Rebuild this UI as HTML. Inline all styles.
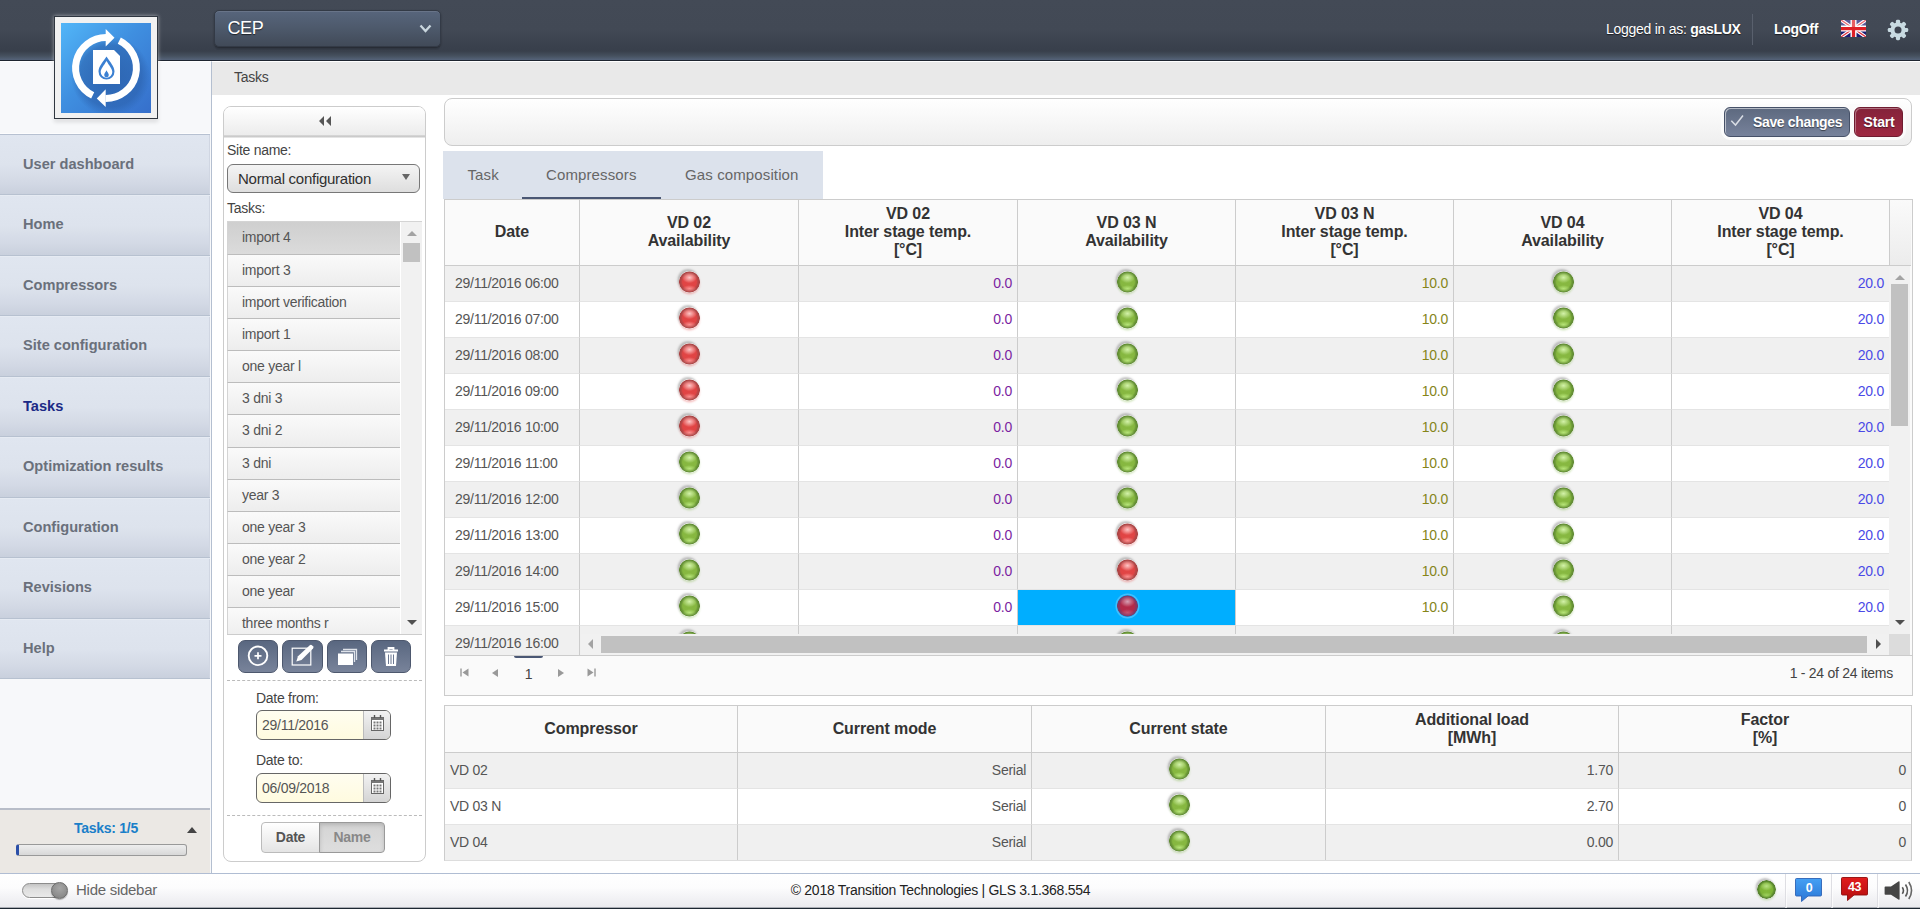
<!DOCTYPE html>
<html lang="en">
<head>
<meta charset="utf-8">
<title>Tasks</title>
<style>
*{box-sizing:border-box;margin:0;padding:0}
html,body{width:1920px;height:909px;overflow:hidden;background:#fff;font-family:"Liberation Sans",sans-serif;font-size:14px;color:#333;letter-spacing:-.27px}
.abs{position:absolute}
/* header */
#hdr{position:absolute;left:0;top:0;width:1920px;height:61px;background:linear-gradient(#434a56 0,#424955 30px,#3a414d 46px,#383f4b 51px,#46515f 56px,#55637a 60px,#1e2530 60px,#1e2530 61px)}
#logo{z-index:5;position:absolute;left:54px;top:16px;width:104px;height:103px;background:#f1f1f1;border:1px solid #2f3640;box-shadow:0 0 4px rgba(255,255,255,.55),0 3px 4px rgba(0,0,0,.12)}
#logo svg{position:absolute;left:6px;top:6px}
#cep{position:absolute;left:213.500px;top:10px;width:227px;height:37px;border-radius:5px;background:linear-gradient(#57657c,#4d596b 50%,#414a58);border:1px solid #333a46;box-shadow:inset 0 1px 0 rgba(255,255,255,.1),0 1px 2px rgba(0,0,0,.35),0 4px 0 -1px rgba(50,56,68,.5);color:#fff;font-size:18px;line-height:34px;padding-left:13px;letter-spacing:-.4px;text-shadow:0 1px 1px rgba(0,0,0,.6)}
#cep svg{position:absolute;right:8px;top:13px}
.hr{position:absolute;top:0;height:60px;line-height:58px;color:#fff;font-size:14px;white-space:nowrap;text-shadow:0 1px 1px rgba(0,0,0,.6)}
/* sidebar */
#side{position:absolute;left:0;top:61px;width:212px;height:812px;background:#f7f8fa;border-right:1px solid #b4bfd0;border-top:1px solid #fff}
#menu{position:absolute;left:0;top:72px;width:210px;border-top:1px solid #b7c1d1;box-shadow:0 -1px 0 #fdfdfe}
#menu div{height:60.5px;line-height:57px;padding-left:23px;font-weight:bold;font-size:14.6px;letter-spacing:0;color:#6a707b;background:linear-gradient(#e0e6f0,#dde3ed 50%,#d3d9e5 80%,#c9d0dd);border-top:1px solid #e6ebf3;border-bottom:1px solid #b7c1d0;box-shadow:inset -1px 0 0 #d0d6e2}
#menu div.act{color:#1c2a86}
#menu div:first-child{height:60px;border-top:0;line-height:59px}
#taskbox{position:absolute;left:0;top:746px;width:210px;height:66px;background:#ebe8e4;border-top:2px solid #b8bdc8}
/* breadcrumb */
#bc{position:absolute;left:212px;top:61px;width:1708px;height:34px;background:#e9e9e9;border-top:1px solid #fff;line-height:31px;padding-left:22px;font-size:14px;color:#444}
/* left panel */
#lp{position:absolute;left:223px;top:106px;width:203px;height:756px;border:1px solid #ccc;border-radius:8px;background:#fff;overflow:hidden}
#lph{height:31px;background:linear-gradient(#fff,#ececec 28px,#bdbdbd 29px,#d8d8d8 30px,#f0f0f0 31px);text-align:center}
.lbl{position:absolute;font-size:14px;color:#444;white-space:nowrap}
#sel{position:absolute;left:3px;top:57px;width:193px;height:29px;border:1px solid #777;border-radius:6px;background:linear-gradient(#f4f4f4,#dedede);font-size:15px;line-height:27px;padding-left:10px;color:#303030}
#list{position:absolute;left:3px;top:114px;width:195px;height:414px;background:#f3f3f3;border-top:1px solid #d4d4d4;border-bottom:1px solid #ccc;overflow:hidden}
#list .it{height:32.1px;width:173px;line-height:30px;padding-left:14px;font-size:14px;color:#555;background:linear-gradient(#fafafa,#ededed);border-bottom:1px solid #bcbcbc;border-left:1px solid #d4d4d4;white-space:nowrap}
#list .it.sel{height:33px;line-height:31px;background:linear-gradient(#cfcfcf,#dbdbdb)}
.ib{position:absolute;top:533px;width:40.400px;height:33px;border-radius:7px;background:linear-gradient(#596780,#78839a);border:1px solid #4d586e}
.ib svg{position:absolute;left:0;top:0}
.dash{position:absolute;left:3px;width:195px;border-top:1px dashed #bbb;height:0}
.din{position:absolute;left:32px;width:135px;height:30px;border:1px solid #666;border-radius:6px;background:linear-gradient(#fffdf0,#fffbdf);overflow:hidden;font-size:14px;line-height:28px;padding-left:5px;color:#555}
.din i{position:absolute;right:0;top:0;width:27px;height:28px;background:linear-gradient(#f2f2f2,#d4d4d4);border-left:1px solid #bbb}
/* main */
#tb{position:absolute;left:444px;top:98px;width:1468px;height:48px;border:1px solid #ccc;border-radius:8px;background:linear-gradient(#fff,#eee)}
.btn{position:absolute;top:107px;height:30px;border-radius:6px;color:#fff;font-weight:bold;font-size:14px;line-height:29px;white-space:nowrap;text-shadow:0 1px 1px rgba(0,0,0,.5);letter-spacing:-.2px}
#tabs{position:absolute;left:443px;top:151px;width:380px;height:48px;background:#dce2ec}
#tabs span{position:absolute;top:0;height:48px;line-height:48px;font-size:15px;color:#666;letter-spacing:.12px}
#tabs b{position:absolute;left:79px;top:45.500px;width:139px;height:2.500px;background:#4a5774}
table{border-collapse:separate;border-spacing:0;table-layout:fixed}
.g{position:absolute;border:1px solid #ccc;background:#fafafa;overflow:hidden}
.g th{letter-spacing:-.1px;font-size:16px;line-height:18px;font-weight:bold;color:#333;text-align:center;background:#fafafa;border-left:1px solid #ccc;vertical-align:middle;padding:0 0 2px}
.g td{height:36px;font-size:14px;color:#555;border-left:1px solid #ccc;border-top:1px solid #e4e4e4;padding:0 5px 2px;white-space:nowrap}
.g tr:nth-child(2) td{border-top-color:#ccc}
.g td:first-child{border-left:0}
#g1 td:first-child{padding-left:10px}
#g2 th{padding-bottom:0}
.g tr.a td{background:#f0f0f0}
.g tr.b td{background:#fff}
.g td.r{text-align:right}
.g td.c{text-align:center;padding:0 0 2px}
.led{display:inline-block;width:21px;height:21.500px;border-radius:50%;vertical-align:middle;position:relative;top:-.7px;left:.5px}
.led.gr{background:radial-gradient(ellipse 7px 3.500px at 50% 80%,rgba(190,235,130,.85),rgba(190,235,130,0)),radial-gradient(ellipse 7.500px 5.500px at 50% 30%,rgba(215,245,175,.95),rgba(200,240,150,0)),radial-gradient(circle at 50% 50%,#88b942 0,#86b740 6.800px,#6a9636 8.600px,#5f8a33 10.100px,rgba(95,140,50,0) 10.900px);box-shadow:-1.500px -2px 2px rgba(140,140,140,.5),0 1.500px 2px rgba(120,180,60,.3)}
.led.rd{background:radial-gradient(ellipse 7px 3.500px at 50% 80%,rgba(255,160,160,.8),rgba(255,160,160,0)),radial-gradient(ellipse 7.500px 5.500px at 50% 30%,rgba(255,205,205,.95),rgba(255,190,190,0)),radial-gradient(circle at 50% 50%,#e24545 0,#e04444 6.800px,#b54646 8.600px,#a94444 10.100px,rgba(169,68,68,0) 10.900px);box-shadow:-1.500px -2px 2px rgba(140,140,140,.5),0 1.500px 2px rgba(230,60,60,.3)}
.g td.c1{color:#7b1fa2}.g td.c2{color:#85851a}.g td.c3{color:#4a4ae6}
/* footer */
#ft{position:absolute;left:0;top:873px;width:1920px;height:36px;background:linear-gradient(#fff,#fcfcfd 40%,#f1f1f4 75%,#e9e9ed);border-top:1px solid #b0bdd3;border-bottom:1px solid #1c2631;box-shadow:inset 0 -1px 0 rgba(28,38,49,.3)}
</style>
</head>
<body>
<div id="hdr">
<div id="cep">CEP<svg width="13" height="10" viewBox="0 0 13 10"><path d="M1.500 1.500L6.500 7L11.500 1.500" fill="none" stroke="#c9d6de" stroke-width="2.300"/></svg></div>
<div class="hr" style="left:1606px">Logged in as: <b>gasLUX</b></div>
<div class="abs" style="left:1752px;top:14px;width:1px;height:31px;background:#59606d"></div>
<div class="hr" style="left:1774px;font-weight:bold;letter-spacing:-.3px">LogOff</div>
<svg class="abs" style="left:1841px;top:20px" width="25" height="17" viewBox="0 0 50 34"><rect width="50" height="34" fill="#1b1b72"/><path d="M0 0L50 34M50 0L0 34" stroke="#fff" stroke-width="7"/><path d="M0 0L50 34M50 0L0 34" stroke="#e0303c" stroke-width="2.500"/><path d="M25 0V34M0 17H50" stroke="#fff" stroke-width="12"/><path d="M25 0V34M0 17H50" stroke="#df2026" stroke-width="6.500"/><rect width="50" height="14" fill="#fff" opacity=".28"/></svg>
<svg class="abs" style="left:1887px;top:19px" width="22" height="22" viewBox="-11 -11 22 22"><g fill="#c9dbe2"><circle r="7.600"/><rect x="-2.100" y="-10.200" width="4.200" height="20.400" rx="1.400"/><rect x="-2.100" y="-10.200" width="4.200" height="20.400" rx="1.400" transform="rotate(45)"/><rect x="-2.100" y="-10.200" width="4.200" height="20.400" rx="1.400" transform="rotate(90)"/><rect x="-2.100" y="-10.200" width="4.200" height="20.400" rx="1.400" transform="rotate(135)"/></g><circle r="3.500" fill="#3e4551"/></svg>
</div>
<div id="logo"><svg width="90" height="90" viewBox="0 0 90 90"><defs><linearGradient id="lg" x1="0" y1="0" x2="1" y2="1"><stop offset="0" stop-color="#52b6f8"/><stop offset=".45" stop-color="#3f8fe0"/><stop offset="1" stop-color="#366fcb"/></linearGradient><radialGradient id="sh" cx=".55" cy=".59" r=".44"><stop offset="0" stop-color="#2a5ea8" stop-opacity=".8"/><stop offset=".78" stop-color="#2a5ea8" stop-opacity=".55"/><stop offset="1" stop-color="#2a5ea8" stop-opacity="0"/></radialGradient></defs><rect width="90" height="90" fill="url(#lg)"/><rect width="90" height="90" fill="url(#sh)"/>
<g fill="none" stroke="#fff" stroke-width="7"><path d="M31.7 72.4A30.5 30.5 0 0 1 45.5 14.500"/><path d="M58.300 17.600A30.500 30.500 0 0 1 44.500 75.500"/></g>
<path d="M44.700 6L53.500 14.800L44.700 23.500Z" fill="#fff"/><path d="M44.700 66.300L35.800 75.500L44.700 84Z" fill="#fff"/>
<path d="M32 27H53L59 33V61H32Z" fill="#fff"/>
<path d="M45.500 33.500C49 39 53.500 43.500 53.500 48.500A8 8 0 0 1 37.500 48.500C37.500 43.500 42 39 45.500 33.500Z" fill="#3b80d2"/><path d="M45.500 38C48 42.500 51.300 45.500 51.300 49A5.800 5.800 0 0 1 39.700 49C39.700 45.500 43 42.500 45.500 38Z" fill="#fff"/><path d="M45.500 47.300C46.500 49.300 47.800 50.600 47.800 52A2.300 2.300 0 0 1 43.200 52C43.200 50.600 44.500 49.300 45.500 47.300Z" fill="#3b80d2"/>
</svg></div>
<div id="side">
<div id="menu"><div>User dashboard</div><div>Home</div><div>Compressors</div><div>Site configuration</div><div class="act">Tasks</div><div>Optimization results</div><div>Configuration</div><div>Revisions</div><div>Help</div></div>
<div id="taskbox"><div class="abs" style="left:74px;top:10px;font-weight:bold;font-size:14px;color:#1a7fc9;white-space:nowrap">Tasks: 1/5</div><div class="abs" style="left:187px;top:16.500px;width:0;height:0;border:5px solid transparent;border-top:0;border-bottom:6px solid #444"></div><div class="abs" style="left:16px;top:34px;width:171px;height:12px;border:1px solid #999;border-radius:3px;background:linear-gradient(#eee,#d8d8d8);border-left:3px solid #2b4fa8"></div></div>
</div>
<div id="bc">Tasks</div>
<div id="lp">
<div id="lph"><svg width="14" height="10" viewBox="0 0 14 10" style="margin-top:9px"><path d="M6 0V10L1 5ZM13 0V10L8 5Z" fill="#555"/></svg></div>
<div class="lbl" style="left:3px;top:35px">Site name:</div>
<div id="sel">Normal configuration<svg class="abs" style="right:9px;top:9px" width="8" height="6" viewBox="0 0 8 6"><path d="M0 0H8L4 6Z" fill="#666"/></svg></div>
<div class="lbl" style="left:3px;top:93px">Tasks:</div>
<div id="list"><div class="it sel">import 4</div><div class="it">import 3</div><div class="it">import verification</div><div class="it">import 1</div><div class="it">one year l</div><div class="it">3 dni 3</div><div class="it">3 dni 2</div><div class="it">3 dni</div><div class="it">year 3</div><div class="it">one year 3</div><div class="it">one year 2</div><div class="it">one year</div><div class="it">three months r</div>
<div class="abs" style="left:173px;top:0;width:22px;height:414px;background:#f1f1f1;border-left:1px solid #fff"></div>
<div class="abs" style="left:179.500px;top:9px;width:0;height:0;border:5px solid transparent;border-top:0;border-bottom:5px solid #a3a3a3"></div>
<div class="abs" style="left:176px;top:21px;width:17px;height:19px;background:#c1c1c1"></div>
<div class="abs" style="left:179.500px;top:398px;width:0;height:0;border:5px solid transparent;border-bottom:0;border-top:5px solid #505050"></div>
</div>
<div class="ib" style="left:14px"><svg width="38" height="31" viewBox="0 0 38 31"><circle cx="19" cy="14.800" r="9.300" fill="none" stroke="#fff" stroke-width="1.900"/><path d="M19 11.300V18.300M15.500 14.800H22.500" stroke="#fff" stroke-width="1.700"/></svg></div>
<div class="ib" style="left:58.300px"><svg width="38" height="31" viewBox="0 0 38 31"><rect x="9.200" y="7.200" width="18.600" height="16.800" fill="none" stroke="#fff" stroke-width="1.200"/><path d="M13.300 20.500L15 15.300L26.800 4.200Q28 3.300 29.200 4.500L30 5.300Q31 6.500 30 7.600L18.500 19Z" fill="#fff"/></svg></div>
<div class="ib" style="left:102.600px"><svg width="38" height="31" viewBox="0 0 38 31"><path d="M15 8.500H28.500V19" fill="none" stroke="#dfe3ea" stroke-width="1.300"/><path d="M13 10.500H26.500V21" fill="none" stroke="#dfe3ea" stroke-width="1.300"/><rect x="10" y="12.500" width="15" height="11.500" fill="#fff"/></svg></div>
<div class="ib" style="left:147px"><svg width="38" height="31" viewBox="0 0 38 31"><path d="M12 9.500H26M16.500 9V7H21.500V9" fill="none" stroke="#fff" stroke-width="1.800"/><path d="M13 11.500H25L24 25H14Z" fill="#fff"/><path d="M16.500 13.500V23M19 13.500V23M21.500 13.500V23" stroke="#6b7790" stroke-width="1"/></svg></div>
<div class="dash" style="top:573px"></div>
<div class="lbl" style="left:32px;top:583px">Date from:</div>
<div class="din" style="top:603px">29/11/2016<i><svg class="abs" style="left:7px;top:4px" width="13" height="16" viewBox="0 0 13 16"><rect x=".5" y="2.500" width="12" height="13" fill="#fff" stroke="#666" stroke-width="1"/><rect x=".5" y="2.500" width="12" height="2.500" fill="#777"/><path d="M3.500 0V3M9.500 0V3" stroke="#555" stroke-width="1.400"/><g fill="#777"><rect x="2.500" y="6.500" width="2" height="2"/><rect x="5.500" y="6.500" width="2" height="2"/><rect x="8.500" y="6.500" width="2" height="2"/><rect x="2.500" y="9.500" width="2" height="2"/><rect x="5.500" y="9.500" width="2" height="2"/><rect x="8.500" y="9.500" width="2" height="2"/><rect x="2.500" y="12.500" width="2" height="2"/><rect x="5.500" y="12.500" width="2" height="2"/><rect x="8.500" y="12.500" width="2" height="2"/></g></svg></i></div>
<div class="lbl" style="left:32px;top:645px">Date to:</div>
<div class="din" style="top:666px">06/09/2018<i><svg class="abs" style="left:7px;top:4px" width="13" height="16" viewBox="0 0 13 16"><rect x=".5" y="2.500" width="12" height="13" fill="#fff" stroke="#666" stroke-width="1"/><rect x=".5" y="2.500" width="12" height="2.500" fill="#777"/><path d="M3.500 0V3M9.500 0V3" stroke="#555" stroke-width="1.400"/><g fill="#777"><rect x="2.500" y="6.500" width="2" height="2"/><rect x="5.500" y="6.500" width="2" height="2"/><rect x="8.500" y="6.500" width="2" height="2"/><rect x="2.500" y="9.500" width="2" height="2"/><rect x="5.500" y="9.500" width="2" height="2"/><rect x="8.500" y="9.500" width="2" height="2"/><rect x="2.500" y="12.500" width="2" height="2"/><rect x="5.500" y="12.500" width="2" height="2"/><rect x="8.500" y="12.500" width="2" height="2"/></g></svg></i></div>
<div class="dash" style="top:708px"></div>
<div class="abs" style="left:37px;top:715px;width:59px;height:31px;border:1px solid #bbb;border-radius:4px 0 0 4px;background:linear-gradient(#fff,#e4e4e4);font-weight:bold;font-size:14px;line-height:28px;text-align:center;color:#555">Date</div>
<div class="abs" style="left:95px;top:715px;width:66px;height:31px;border:1px solid #999;border-radius:0 4px 4px 0;background:linear-gradient(#d4d4d4,#dedede);font-weight:bold;font-size:14px;line-height:28px;text-align:center;color:#888;box-shadow:inset 0 2px 4px rgba(0,0,0,.15)">Name</div>
</div>
<div id="tb"></div>
<div class="abs" style="left:1721px;top:104px;width:185px;height:36px;border-radius:9px;background:#fbfbfb"></div>
<div class="btn" style="left:1724px;width:126px;background:linear-gradient(#5d697f,#77829b);border:1px solid #465168;box-shadow:inset 1px 1px 0 rgba(255,255,255,.55);padding-left:28px;letter-spacing:-.35px">Save changes<svg class="abs" style="left:5px;top:6px" width="15" height="13" viewBox="0 0 15 13"><path d="M1.300 6.800L5.500 11L13 1.500" fill="none" stroke="#d9dde4" stroke-width="1.500"/></svg></div>
<div class="btn" style="left:1854px;width:49px;background:linear-gradient(#84233a,#9e2841);border:1px solid #6f1c30;box-shadow:inset 1px 1px 0 rgba(255,255,255,.35);text-align:center;padding-left:1px">Start</div>
<div id="tabs"><span style="left:24.500px">Task</span><span style="left:103px">Compressors</span><span style="left:242px">Gas composition</span><b></b></div>
<div class="g" id="g1" style="left:444px;top:199px;width:1469px;height:497px">
<table style="position:absolute;left:0;top:0;width:1444px"><colgroup><col style="width:134px"><col style="width:219px"><col style="width:219px"><col style="width:218px"><col style="width:218px"><col style="width:218px"><col style="width:218px"></colgroup>
<tr style="height:65px"><th style="border-left:0">Date</th><th>VD 02<br>Availability</th><th>VD 02<br>Inter stage temp.<br>[°C]</th><th>VD 03 N<br>Availability</th><th>VD 03 N<br>Inter stage temp.<br>[°C]</th><th>VD 04<br>Availability</th><th>VD 04<br>Inter stage temp.<br>[°C]</th></tr>
<tr class="a"><td>29/11/2016 06:00</td><td class="c"><span class="led rd"></span></td><td class="r c1">0.0</td><td class="c"><span class="led gr"></span></td><td class="r c2">10.0</td><td class="c"><span class="led gr"></span></td><td class="r c3">20.0</td></tr>
<tr class="b"><td>29/11/2016 07:00</td><td class="c"><span class="led rd"></span></td><td class="r c1">0.0</td><td class="c"><span class="led gr"></span></td><td class="r c2">10.0</td><td class="c"><span class="led gr"></span></td><td class="r c3">20.0</td></tr>
<tr class="a"><td>29/11/2016 08:00</td><td class="c"><span class="led rd"></span></td><td class="r c1">0.0</td><td class="c"><span class="led gr"></span></td><td class="r c2">10.0</td><td class="c"><span class="led gr"></span></td><td class="r c3">20.0</td></tr>
<tr class="b"><td>29/11/2016 09:00</td><td class="c"><span class="led rd"></span></td><td class="r c1">0.0</td><td class="c"><span class="led gr"></span></td><td class="r c2">10.0</td><td class="c"><span class="led gr"></span></td><td class="r c3">20.0</td></tr>
<tr class="a"><td>29/11/2016 10:00</td><td class="c"><span class="led rd"></span></td><td class="r c1">0.0</td><td class="c"><span class="led gr"></span></td><td class="r c2">10.0</td><td class="c"><span class="led gr"></span></td><td class="r c3">20.0</td></tr>
<tr class="b"><td>29/11/2016 11:00</td><td class="c"><span class="led gr"></span></td><td class="r c1">0.0</td><td class="c"><span class="led gr"></span></td><td class="r c2">10.0</td><td class="c"><span class="led gr"></span></td><td class="r c3">20.0</td></tr>
<tr class="a"><td>29/11/2016 12:00</td><td class="c"><span class="led gr"></span></td><td class="r c1">0.0</td><td class="c"><span class="led gr"></span></td><td class="r c2">10.0</td><td class="c"><span class="led gr"></span></td><td class="r c3">20.0</td></tr>
<tr class="b"><td>29/11/2016 13:00</td><td class="c"><span class="led gr"></span></td><td class="r c1">0.0</td><td class="c"><span class="led rd"></span></td><td class="r c2">10.0</td><td class="c"><span class="led gr"></span></td><td class="r c3">20.0</td></tr>
<tr class="a"><td>29/11/2016 14:00</td><td class="c"><span class="led gr"></span></td><td class="r c1">0.0</td><td class="c"><span class="led rd"></span></td><td class="r c2">10.0</td><td class="c"><span class="led gr"></span></td><td class="r c3">20.0</td></tr>
<tr class="b"><td>29/11/2016 15:00</td><td class="c"><span class="led gr"></span></td><td class="r c1">0.0</td><td class="c" style="background:#00aeff"><span class="led rd" style="background:radial-gradient(ellipse 7px 3.500px at 50% 80%,rgba(200,110,140,.6),rgba(200,110,140,0)),radial-gradient(ellipse 7.500px 5.500px at 50% 30%,rgba(215,165,185,.95),rgba(215,165,185,0)),radial-gradient(circle at 50% 50%,#b42a49 0,#b22a49 6.800px,#8a3560 8.600px,#7c3a68 10.100px,rgba(124,58,104,0) 10.900px);box-shadow:0 0 0 1.500px rgba(120,205,252,.55)"></span></td><td class="r c2">10.0</td><td class="c"><span class="led gr"></span></td><td class="r c3">20.0</td></tr>
<tr class="a"><td>29/11/2016 16:00</td><td class="c"><span class="led gr"></span></td><td class="r c1">0.0</td><td class="c"><span class="led gr"></span></td><td class="r c2">10.0</td><td class="c"><span class="led gr"></span></td><td class="r c3">20.0</td></tr>
</table>
<div class="abs" style="left:1444px;top:0;width:22px;height:66px;background:linear-gradient(#fafafa,#ececec);border-left:1px solid #ccc;border-bottom:1px solid #ccc"></div>
<div class="abs" style="left:1444px;top:66px;width:21px;height:368px;background:#f1f1f1"></div>
<div class="abs" style="left:1449.500px;top:75px;width:0;height:0;border:5px solid transparent;border-top:0;border-bottom:5px solid #a3a3a3"></div>
<div class="abs" style="left:1446px;top:84px;width:17px;height:142px;background:#c1c1c1"></div>
<div class="abs" style="left:1449.500px;top:420px;width:0;height:0;border:5px solid transparent;border-bottom:0;border-top:5px solid #505050"></div>
<div class="abs" style="left:136px;top:434px;width:1309px;height:21px;background:#f1f1f1"></div>
<div class="abs" style="left:143px;top:439px;width:0;height:0;border:5px solid transparent;border-left:0;border-right:5px solid #a3a3a3"></div>
<div class="abs" style="left:156px;top:436px;width:1266px;height:17px;background:#c1c1c1"></div>
<div class="abs" style="left:1431px;top:439px;width:0;height:0;border:5px solid transparent;border-right:0;border-left:5px solid #505050"></div>
<div class="abs" style="left:1444px;top:434px;width:21px;height:21px;background:#dcdcdc"></div>
<div id="pg" class="abs" style="left:0;top:455px;width:1467px;height:41px;background:#fafafa;border-top:1px solid #ccc">
<div class="abs" style="left:69px;top:0;width:29px;height:2px;background:#4a5774;border-radius:0 0 2px 2px"></div>
<svg class="abs" style="left:15px;top:12px" width="9" height="9" viewBox="0 0 9 9"><path d="M1 .5V8.500" stroke="#999" stroke-width="1.400"/><path d="M8.500 .5V8.500L2.500 4.500Z" fill="#999"/></svg>
<svg class="abs" style="left:46px;top:12px" width="8" height="10" viewBox="0 0 8 10"><path d="M7 1V9L1 5Z" fill="#999"/></svg>
<div class="abs" style="left:69px;top:0;width:29px;height:40px;line-height:36px;text-align:center;font-size:14px;color:#444">1</div>
<svg class="abs" style="left:112px;top:12px" width="8" height="10" viewBox="0 0 8 10"><path d="M1 1V9L7 5Z" fill="#999"/></svg>
<svg class="abs" style="left:142px;top:12px" width="9" height="9" viewBox="0 0 9 9"><path d="M8 .5V8.500" stroke="#999" stroke-width="1.400"/><path d="M.5 .5V8.500L6.500 4.500Z" fill="#999"/></svg>
<div class="abs" style="right:19px;top:0;height:40px;line-height:34px;font-size:14px;color:#444;white-space:nowrap">1 - 24 of 24 items</div>
</div>
</div>
<div class="g" id="g2" style="left:444px;top:705px;width:1468px;height:156px;border-bottom-color:#ddd">
<table style="position:absolute;left:0;top:0;width:1466px"><colgroup><col style="width:292px"><col style="width:294px"><col style="width:294px"><col style="width:293px"><col style="width:293px"></colgroup>
<tr style="height:46px"><th style="border-left:0">Compressor</th><th>Current mode</th><th>Current state</th><th>Additional load<br>[MWh]</th><th>Factor<br>[%]</th></tr>
<tr class="a"><td>VD 02</td><td class="r">Serial</td><td class="c"><span class="led gr"></span></td><td class="r">1.70</td><td class="r">0</td></tr>
<tr class="b"><td>VD 03 N</td><td class="r">Serial</td><td class="c"><span class="led gr"></span></td><td class="r">2.70</td><td class="r">0</td></tr>
<tr class="a"><td>VD 04</td><td class="r">Serial</td><td class="c"><span class="led gr"></span></td><td class="r">0.00</td><td class="r">0</td></tr>
</table></div>
<div id="ft">
<div class="abs" style="left:22px;top:9px;width:45px;height:15px;border-radius:8px;border:1px solid #8c8c8c;background:linear-gradient(#c4c4c4,#dedede 40%,#e9e9e9);box-shadow:0 1px 0 #fff"></div>
<div class="abs" style="left:51px;top:8px;width:17px;height:17px;border-radius:50%;background:radial-gradient(circle at 50% 35%,#a6a6a6,#7f7f7f);border:1px solid #6a6a6a;box-shadow:0 1px 1px rgba(0,0,0,.3)"></div>
<div class="abs" style="left:76px;top:0;line-height:32px;font-size:15px;color:#666">Hide sidebar</div>
<div class="abs" style="left:0;width:1881px;top:0;text-align:center;line-height:32px;font-size:14px;color:#222">© 2018 Transition Technologies | GLS 3.1.368.554</div>
<span class="led gr" style="position:absolute;left:1756.500px;top:6px;width:19px;height:19px;background:radial-gradient(ellipse 6px 3px at 50% 80%,rgba(170,220,110,.7),rgba(170,220,110,0)),radial-gradient(ellipse 6.500px 4.500px at 50% 32%,rgba(190,230,140,.9),rgba(190,230,140,0)),radial-gradient(circle at 50% 50%,#84ba3a 0,#7db336 6px,#5d8c2f 7.800px,#557f2d 9px,rgba(85,127,45,0) 9.700px)"></span>
<div class="abs" style="left:1785px;top:0;width:2px;height:34px;background:linear-gradient(90deg,#dedee3 50%,rgba(255,255,255,.7) 50%)"></div><div class="abs" style="left:1831px;top:0;width:2px;height:34px;background:linear-gradient(90deg,#dedee3 50%,rgba(255,255,255,.7) 50%)"></div><div class="abs" style="left:1877px;top:0;width:2px;height:34px;background:linear-gradient(90deg,#dedee3 50%,rgba(255,255,255,.7) 50%)"></div>
<svg class="abs" style="left:1793px;top:3px" width="32" height="28" viewBox="0 0 32 28"><defs><linearGradient id="bl" x1="0" y1="0" x2="0" y2="1"><stop offset="0" stop-color="#45a0f4"/><stop offset="1" stop-color="#2a76d6"/></linearGradient><linearGradient id="rl" x1="0" y1="0" x2="0" y2="1"><stop offset="0" stop-color="#e11d1d"/><stop offset="1" stop-color="#b40e0e"/></linearGradient></defs><path d="M3.500 1.500H27.500Q28.500 1.500 28.500 2.500V18Q28.500 19 27.500 19H15L8.500 24.500V19H3.500Q2.500 19 2.500 18V2.500Q2.500 1.500 3.500 1.500Z" fill="url(#bl)" stroke="#2d62b4" stroke-width=".9"/><text x="16" y="14.500" font-size="12.500" font-weight="bold" fill="#fff" text-anchor="middle" font-family="Liberation Sans,sans-serif">0</text></svg>
<svg class="abs" style="left:1839px;top:2px" width="32" height="28" viewBox="0 0 32 28"><path d="M3.500 1.500H27.500Q28.500 1.500 28.500 2.500V18Q28.500 19 27.500 19H15L8.500 24.500V19H3.500Q2.500 19 2.500 18V2.500Q2.500 1.500 3.500 1.500Z" fill="url(#rl)" stroke="#8e0b0b" stroke-width=".9"/><text x="15.600" y="14.800" font-size="12.500" font-weight="bold" fill="#fff" text-anchor="middle" font-family="Liberation Sans,sans-serif" letter-spacing="-.4">43</text></svg>
<svg class="abs" style="left:1883px;top:6px" width="32" height="22" viewBox="0 0 32 22"><path d="M2.500 6.400H8L15.800 1.300Q16.600 1 16.600 2V19Q16.600 20 15.800 19.700L8 14.800H2.500Q1.600 14.800 1.600 14V7.200Q1.600 6.400 2.500 6.400Z" fill="#454545"/><path d="M19.300 7.200Q21.600 10.500 19.300 13.800" fill="none" stroke="#555" stroke-width="1.600"/><path d="M22.500 4.500Q26.500 10.500 22.500 16.500" fill="none" stroke="#5a5a5a" stroke-width="1.600"/><path d="M25.800 2Q31.300 10.500 25.800 19" fill="none" stroke="#666" stroke-width="1.600"/></svg>
</div>
</body>
</html>
